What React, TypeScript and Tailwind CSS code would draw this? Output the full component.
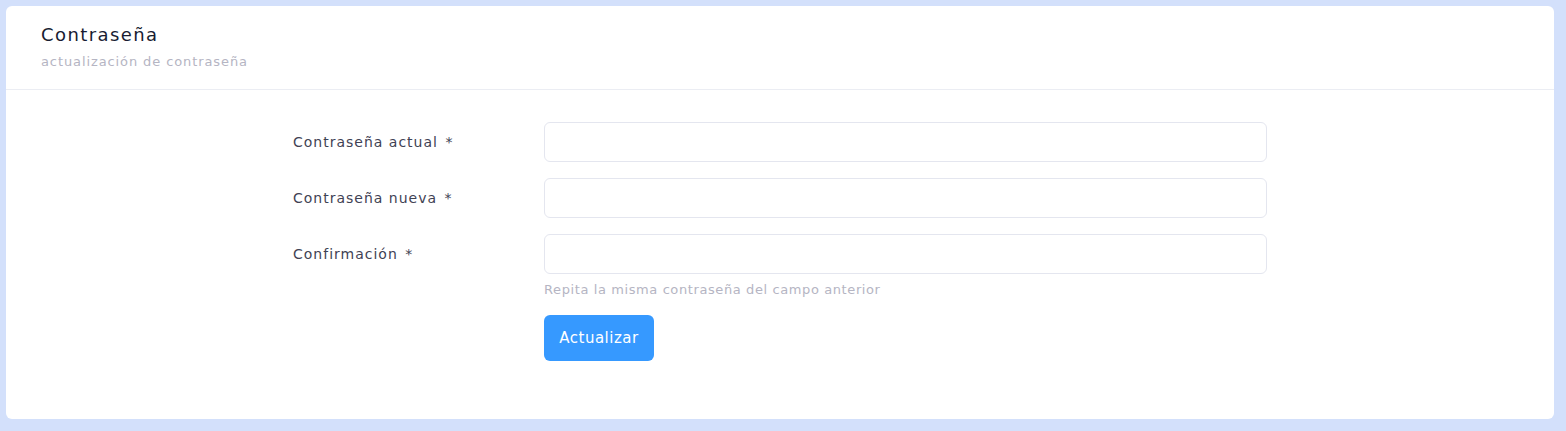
const font = { fontFamily: '"DejaVu Sans", "Noto Sans", sans-serif' };

function Field({ label, hint }: { label: string; hint?: string }) {
  return (
    <div className="flex">
      <label className="w-[251px] shrink-0 pt-[10px] text-[14px] leading-[20px] tracking-[1px] text-[#3f4254]">
        {label} <span className="ml-[2px]">*</span>
      </label>
      <div className="w-[723px]">
        <input
          type="password"
          className="block h-[40px] w-full rounded-[6px] border border-[#e4e6ef] bg-white px-3 outline-none"
        />
        {hint && (
          <p className="mt-[6px] text-[13px] leading-[20px] tracking-[0.6px] text-[#b5b5c3]">{hint}</p>
        )}
      </div>
    </div>
  );
}

export default function App() {
  return (
    <div className="min-h-[431px] bg-[#d3e0fb] p-[6px] pb-[12px] pr-[12px]" style={font}>
      <div className="rounded-[6px] bg-white">
        <div className="h-[84px] border-b border-[#ebedf3] px-[35px] pt-[17px]">
          <h3 className="text-[18px] leading-[24px] tracking-[1.4px] text-[#181c32]">Contraseña</h3>
          <p className="mt-[6px] text-[13px] leading-[18px] tracking-[0.9px] text-[#b5b5c3]">
            actualización de contraseña
          </p>
        </div>
        <div className="flex flex-col gap-[16px] pb-[58px] pl-[287px] pt-[32px]">
          <Field label="Contraseña actual" />
          <Field label="Contraseña nueva" />
          <Field label="Confirmación" hint="Repita la misma contraseña del campo anterior" />
          <div className="ml-[251px] -mt-[1px]">
            <button className="h-[46px] w-[110px] rounded-[6px] bg-[#3699ff] text-[15px] tracking-[0.5px] text-white">
              Actualizar
            </button>
          </div>
        </div>
      </div>
    </div>
  );
}
